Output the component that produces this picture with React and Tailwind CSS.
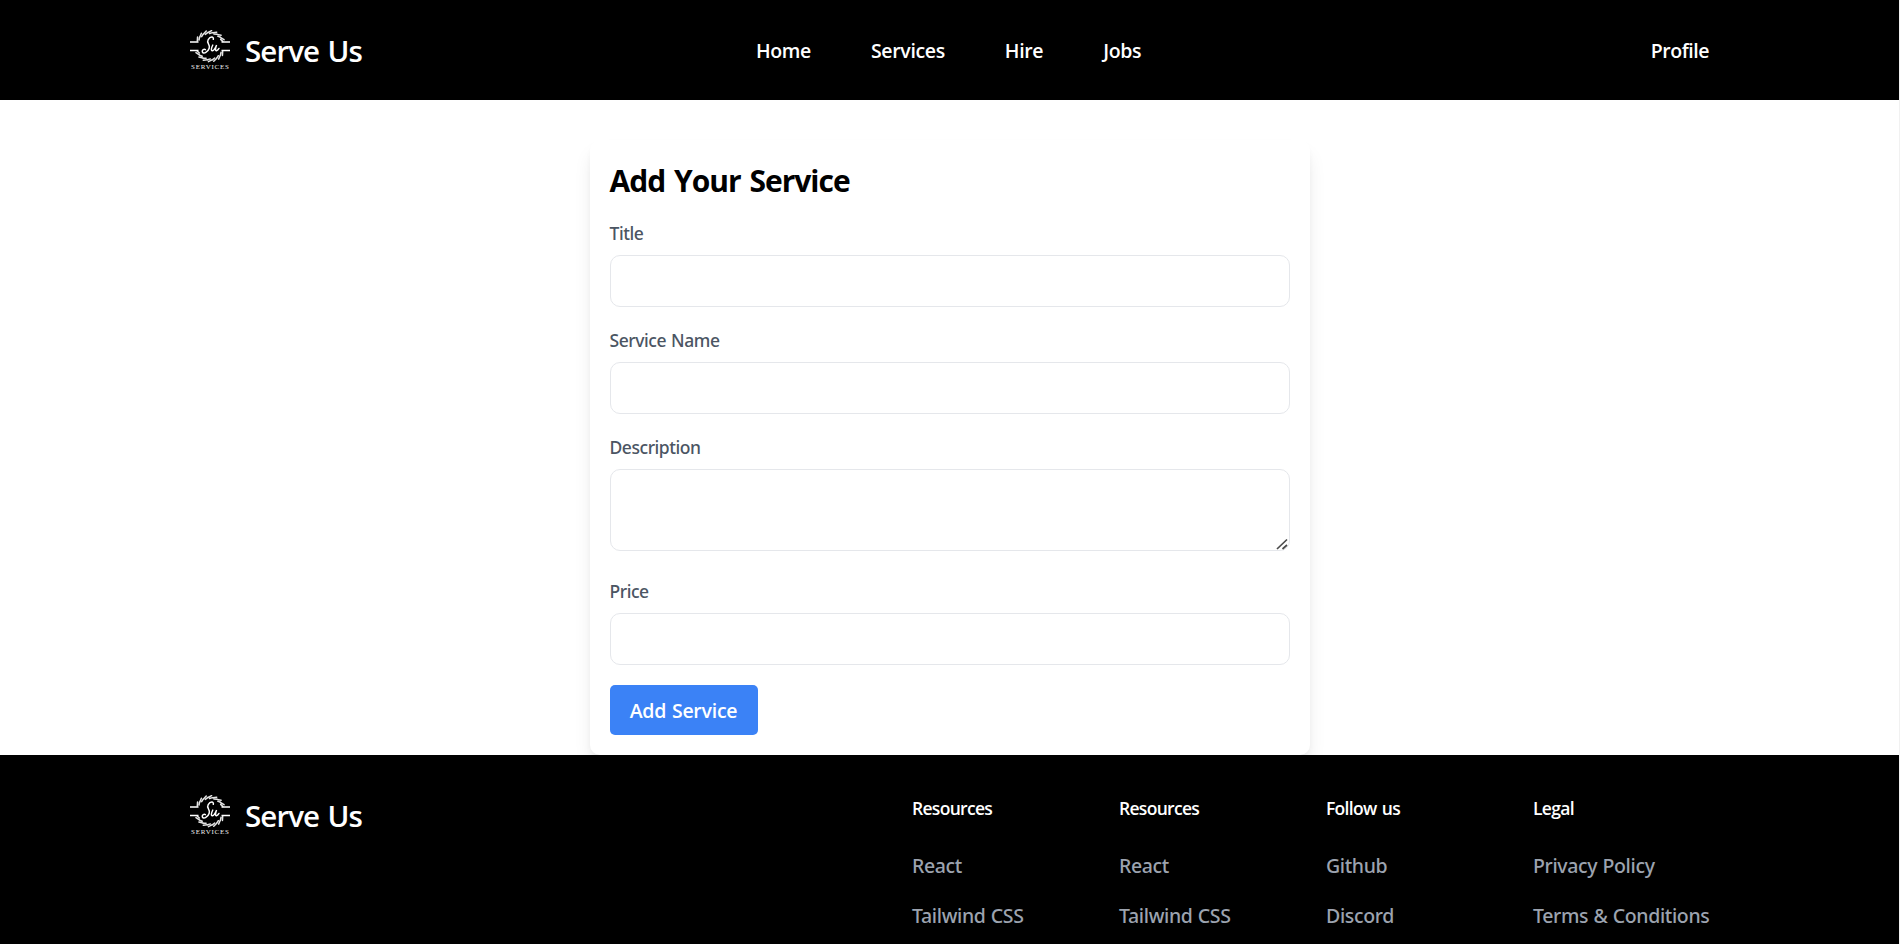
import React from "react";

const font = "font-['Open_Sans','Noto_Sans',sans-serif]";

const leafAngles = [-60, -40, -20, 0, 20, 40, 60];

function Wreath() {
  return (
    <g>
      {leafAngles.map((a) => (
        <path key={a} d="M-2 0.9L1.6 -0.9M-0.4 1.9L2.4 1" transform={`rotate(${a} 20 16) translate(20 1.6)`} />
      ))}
    </g>
  );
}

function Logo() {
  return (
    <svg className="h-10 w-10 shrink-0" viewBox="0 0 40 40" fill="none" stroke="#fff">
      <g stroke="#e4e4e4" strokeWidth="1.5" strokeLinecap="round">
        <Wreath />
        <g transform="rotate(180 20 16.2)">
          <Wreath />
        </g>
      </g>
      <path d="M0 12H8.5M31.5 12H40M0 20.5H8.5M31.5 20.5H40" strokeWidth="1.3" />
      <path d="M23.3 9.3C24 6.2 20.2 6.4 18.2 9.6C16 13.2 20.6 14 19.2 18.2C17.8 22.6 13.2 24.6 12.3 21.8C12 20 14 18.8 15.4 19.6" strokeWidth="1.5" strokeLinecap="round" />
      <path d="M22.8 15C21.2 18 20.8 21 22.4 20.8C24.2 20.4 25.6 17.5 26.6 15C25.4 18 25 21 26.5 20.7C27.6 20.5 28.4 19.5 29 18.4" strokeWidth="1.4" strokeLinecap="round" />
      <text x="1" y="39.2" fill="#f0f0f0" stroke="none" fontSize="7" textLength="38" lengthAdjust="spacing" fontFamily="Liberation Serif, serif">SERVICES</text>
    </svg>
  );
}

function Brand() {
  return (
    <div className="flex h-[50px] items-center gap-[15px]">
      <Logo />
      <span className="pt-0.5 text-[29.5px] font-semibold leading-[38px] tracking-[-0.9px] text-white [word-spacing:1.5px]">Serve Us</span>
    </div>
  );
}

function Field({ label, children }) {
  return (
    <div className="mb-5">
      <label className="mb-2 block h-[27px] font-['Noto_Sans',sans-serif] text-[17.5px] font-medium leading-[26px] tracking-[-0.45px] text-[#4b5563] [word-spacing:1px]">{label}</label>
      {children}
    </div>
  );
}

const inputClass = "block h-[52px] w-full rounded-[10px] border border-[#e5e7eb] bg-white px-5 outline-none";

const columns = [
  { title: "Resources", links: ["React", "Tailwind CSS"] },
  { title: "Resources", links: ["React", "Tailwind CSS"] },
  { title: "Follow us", links: ["Github", "Discord"] },
  { title: "Legal", links: ["Privacy Policy", "Terms & Conditions"] },
];

export default function App() {
  return (
    <div className={`flex h-[944px] flex-col overflow-hidden border-r border-[#f1f1f1] bg-white ${font}`}>
      <header className="h-[100px] shrink-0 bg-black px-[190px] pt-[25px]">
        <div className="flex h-[50px] items-center justify-between">
          <div className="w-[566px]"><Brand /></div>
          <nav className="flex flex-1 gap-[60px] pt-0.5 text-[19.5px] font-semibold tracking-[-0.35px] text-white">
            <a>Home</a>
            <a>Services</a>
            <a>Hire</a>
            <a>Jobs</a>
          </nav>
          <a className="pt-0.5 text-[19.5px] font-semibold tracking-[-0.45px] text-white">Profile</a>
        </div>
      </header>
      <main className="flex h-[655px] shrink-0 justify-center overflow-hidden pt-10">
        <form className="h-[615px] w-[720px] rounded-[10px] bg-white p-5 shadow-[0_12.5px_18.75px_-3.75px_rgba(0,0,0,0.1),0_5px_7.5px_-2.5px_rgba(0,0,0,0.05)]">
          <h1 className="mb-[18px] h-[42px] text-[30px] font-bold leading-[41px] tracking-[-1px] text-black [word-spacing:2px]">Add Your Service</h1>
          <Field label="Title"><input className={inputClass} /></Field>
          <Field label="Service Name"><input className={inputClass} /></Field>
          <Field label="Description">
            <div className="relative mb-[27px]">
              <textarea className="block h-[82px] w-full resize-none rounded-[10px] border border-[#e5e7eb] bg-white px-5 outline-none" />
              <svg className="pointer-events-none absolute right-[2px] bottom-px h-3 w-3" viewBox="0 0 12 12" stroke="#4b4b4b" strokeWidth="1.7">
                <path d="M1 11L11 1.5M6.5 11L11 7" />
              </svg>
            </div>
          </Field>
          <Field label="Price"><input className={inputClass} /></Field>
          <button type="button" className="block h-[50px] w-[148px] rounded-[5px] bg-[#3b82f6] pt-0.5 text-[19.5px] font-semibold tracking-[-0.25px] text-white [word-spacing:1px]">Add Service</button>
        </form>
      </main>
      <footer className="flex flex-1 bg-black pl-[190px] pt-[35px]">
        <div className="w-[722px]"><Brand /></div>
        {columns.map((col, i) => (
          <div key={i} className="w-[207px] shrink-0 whitespace-nowrap pt-px">
            <h2 className="h-[35px] text-[17.5px] font-semibold leading-[35px] tracking-[-0.7px] text-white [word-spacing:1.5px]">{col.title}</h2>
            <ul className="mt-[25px] flex flex-col gap-5 font-['Noto_Sans',sans-serif] text-[19.5px] font-medium leading-[30px] tracking-[-0.35px] text-[#9ca3af] [word-spacing:0.5px]">
              {col.links.map((l) => <li key={l}>{l}</li>)}
            </ul>
          </div>
        ))}
      </footer>
    </div>
  );
}
